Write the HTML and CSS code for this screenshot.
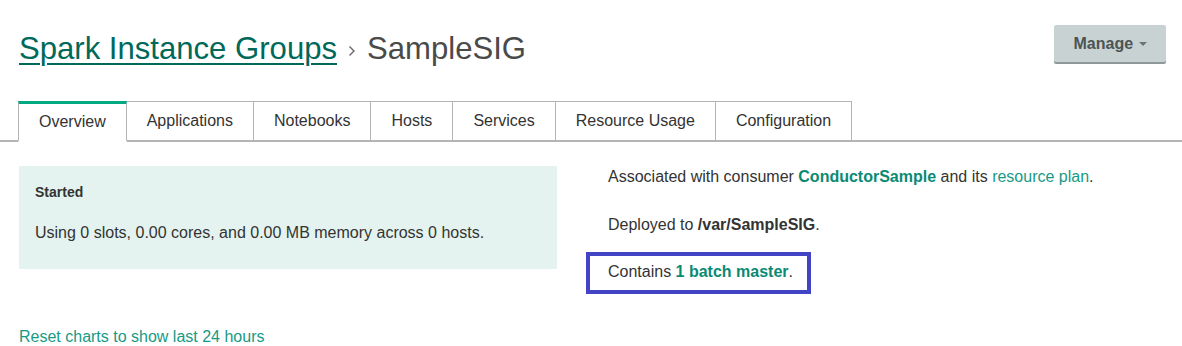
FILE: index.html
```html
<!DOCTYPE html>
<html lang="en">

<head>
    <meta charset="UTF-8">
    <title>SampleSIG</title>
    <link rel="stylesheet" href="styles.css">
</head>

<body>
    <div class="page-header">
        <h1 class="breadcrumb">
            <a href="#" class="crumb-link">Spark Instance Groups</a>
            <svg class="crumb-sep" width="8" height="12" viewBox="0 0 8 12">
                <path d="M1.5 1.5 L6 6 L1.5 10.5" fill="none" stroke="#666" stroke-width="1.4" />
            </svg>
            <span class="crumb-current">SampleSIG</span>
        </h1>
        <button class="manage-button">Manage <span class="caret"></span></button>
    </div>

    <div class="tabs">
        <a href="#" class="tab active">Overview</a>
        <a href="#" class="tab">Applications</a>
        <a href="#" class="tab">Notebooks</a>
        <a href="#" class="tab">Hosts</a>
        <a href="#" class="tab">Services</a>
        <a href="#" class="tab">Resource Usage</a>
        <a href="#" class="tab">Configuration</a>
    </div>

    <div class="overview">
        <div class="status-box">
            <div class="status-title">Started</div>
            <p>Using 0 slots, 0.00 cores, and 0.00 MB memory across 0 hosts.</p>
        </div>
        <div class="details">
            <p>Associated with consumer <a href="#" class="strong-link">ConductorSample</a> and its <a href="#" class="link">resource plan</a>.</p>
            <p>Deployed to <strong>/var/SampleSIG</strong>.</p>
            <p class="highlight">Contains <a href="#" class="strong-link">1 batch master</a>.</p>
        </div>
    </div>

    <div class="footer-links">
        <a href="#" class="link">Reset charts to show last 24 hours</a>
    </div>
</body>

</html>
```

FILE: styles.css
```css
body {
    font-family: Arial, "Liberation Sans", sans-serif;
    color: #333;
    margin: 0;
    padding: 0;
    background: #fff;
}

a {
    text-decoration: none;
}

.page-header {
    display: flex;
    justify-content: space-between;
    align-items: flex-start;
    padding: 25px 16px 0 19px;
}

.breadcrumb {
    display: flex;
    align-items: center;
    margin: 6px 0 0;
    font-size: 31.1px;
    font-weight: normal;
    line-height: 36px;
}

.crumb-link {
    color: #00695a;
    text-decoration: underline;
    text-decoration-thickness: 2px;
    text-underline-offset: 4px;
}

.crumb-sep {
    margin: 3px 11px 0 11px;
}

.crumb-current {
    color: #4a4a4a;
}

.manage-button {
    width: 112px;
    height: 37px;
    border: none;
    border-radius: 2px;
    background: #c9d2d2;
    box-shadow: 0 2px 0 #8f9999;
    color: #4c5454;
    font-family: Arial, "Liberation Sans", sans-serif;
    font-size: 16px;
    font-weight: bold;
    cursor: pointer;
}

.caret {
    display: inline-block;
    width: 0;
    height: 0;
    margin-left: 1px;
    vertical-align: middle;
    border-top: 4px solid #6a7272;
    border-left: 4px solid transparent;
    border-right: 4px solid transparent;
}

.tabs {
    display: flex;
    margin-top: 34px;
    padding-left: 18px;
    border-bottom: 2px solid #b4b4b4;
}

.tab {
    padding: 0 20px;
    height: 38px;
    line-height: 38px;
    margin-bottom: -2px;
    border: 1px solid #b4b4b4;
    border-left: none;
    border-bottom: 2px solid #b4b4b4;
    color: #333;
    font-size: 16px;
    background: #fff;
}

.tab.active {
    border-left: 1px solid #b4b4b4;
    border-top: 3px solid #01a982;
    height: 36px;
    line-height: 36px;
    border-bottom-color: #fff;
}

.overview {
    display: grid;
    grid-template-columns: 538px 1fr;
    column-gap: 29px;
    padding: 24px 19px 0;
}

.status-box {
    background: #e4f3ef;
    height: 103px;
    padding: 0 16px;
    box-sizing: border-box;
    font-size: 16px;
}

.status-title {
    margin-top: 17px;
    font-size: 14px;
    font-weight: bold;
    line-height: 18px;
}

.status-box p {
    margin: 22px 0 0;
    line-height: 20px;
}

.details {
    padding-top: 1px;
    font-size: 16px;
}

.details p {
    margin: 0;
    padding: 0 22px;
    line-height: 20px;
}

.details p + p {
    margin-top: 28px;
}

.details p.highlight {
    display: inline-block;
    margin-top: 17px;
    padding: 6px 14px 8px 18px;
    border: 4px solid #4343c6;
}

.strong-link {
    color: #0a8a74;
    font-weight: bold;
}

.link {
    color: #179a85;
}

.footer-links {
    padding: 34px 19px 0;
    font-size: 16px;
}
```
